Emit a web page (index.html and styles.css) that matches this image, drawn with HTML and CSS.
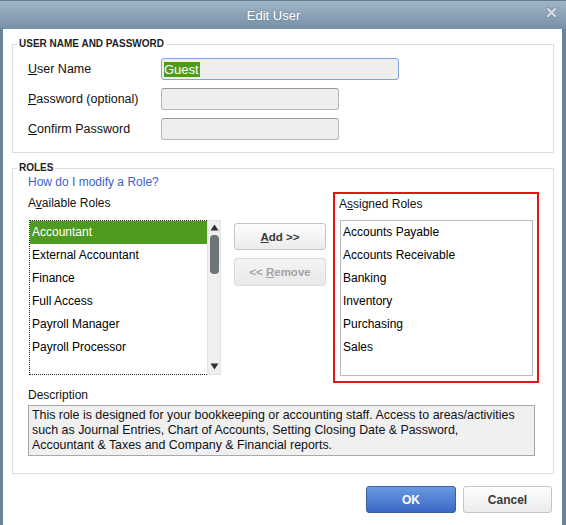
FILE: index.html
```html
<!DOCTYPE html>
<html>
<head>
<meta charset="utf-8">
<title>Edit User</title>
<link rel="stylesheet" href="styles.css">
</head>
<body>
<div class="window">
  <div class="titlebar">
    <span class="title">Edit User</span>
    <span class="close">
      <svg width="11" height="11" viewBox="0 0 11 11"><path d="M2 2 L9 9 M9 2 L2 9" stroke="#8193a4" stroke-width="4" stroke-linecap="square"/><path d="M2 2 L9 9 M9 2 L2 9" stroke="#d6dde3" stroke-width="2.2" stroke-linecap="square"/></svg>
    </span>
  </div>
  <div class="client">
    <fieldset class="group">
      <legend>USER NAME AND PASSWORD</legend>
      <div class="group-body g1">
        <div class="form-row">
          <span class="flabel"><u>U</u>ser Name</span>
          <div class="input wide focus"><span class="sel">Guest</span></div>
        </div>
        <div class="form-row">
          <span class="flabel"><u>P</u>assword (optional)</span>
          <div class="input narrow"></div>
        </div>
        <div class="form-row">
          <span class="flabel"><u>C</u>onfirm Password</span>
          <div class="input narrow"></div>
        </div>
      </div>
    </fieldset>
    <fieldset class="group g2-set">
      <legend>ROLES</legend>
      <div class="group-body g2">
        <a class="help">How do I modify a Role?</a>
        <div class="roles-row">
          <div class="avail-col">
            <div class="col-label">A<u>v</u>ailable Roles</div>
            <div class="listbox avail">
              <ul class="items dotted">
                <li class="selected">Accountant</li>
                <li>External Accountant</li>
                <li>Finance</li>
                <li>Full Access</li>
                <li>Payroll Manager</li>
                <li>Payroll Processor</li>
              </ul>
              <div class="scrollbar">
                <svg class="arrow up" width="9" height="7" viewBox="0 0 9 7"><path d="M4.5 0.5 L8.5 6.5 L0.5 6.5 Z" fill="#2f2f2f"/></svg>
                <div class="thumb"></div>
                <div class="spacer"></div>
                <svg class="arrow down" width="9" height="7" viewBox="0 0 9 7"><path d="M0.5 0.5 L8.5 0.5 L4.5 6.5 Z" fill="#2f2f2f"/></svg>
              </div>
            </div>
          </div>
          <div class="mid-col">
            <button class="btn small add"><u>A</u>dd &gt;&gt;</button>
            <button class="btn small disabled">&lt;&lt; <u>R</u>emove</button>
          </div>
          <div class="assigned-box">
            <div class="col-label">A<u>s</u>signed Roles</div>
            <ul class="items plain">
              <li>Accounts Payable</li>
              <li>Accounts Receivable</li>
              <li>Banking</li>
              <li>Inventory</li>
              <li>Purchasing</li>
              <li>Sales</li>
            </ul>
          </div>
        </div>
        <div class="desc-label">Description</div>
        <div class="desc">This role is designed for your bookkeeping or accounting staff. Access to areas/activities such as Journal Entries, Chart of Accounts, Setting Closing Date &amp; Password, Accountant &amp; Taxes and Company &amp; Financial reports.</div>
      </div>
    </fieldset>
    <div class="footer">
      <button class="btn big primary">OK</button>
      <button class="btn big">Cancel</button>
    </div>
  </div>
</div>
</body>
</html>
```

FILE: styles.css
```css
* { box-sizing: border-box; }
html, body {
  margin: 0;
  padding: 0;
}
body {
  width: 566px;
  height: 525px;
  overflow: hidden;
  background: #6b8399;
  font-family: "Liberation Sans", Arial, sans-serif;
  font-size: 12px;
  color: #000;
}
u { text-decoration: underline; text-underline-offset: 1px; }

.window {
  display: flex;
  flex-direction: column;
  height: 525px;
}

.titlebar {
  height: 29px;
  display: flex;
  align-items: center;
  background: linear-gradient(#a0b5c7, #7790a6);
  border-top: 1px solid #647c92;
}
.title {
  flex: 1;
  text-align: center;
  color: #fff;
  font-size: 13px;
  text-shadow: 0 0 2px rgba(60, 80, 100, 0.45);
}
.close {
  width: 20px;
  display: flex;
  margin-left: -1px;
  margin-top: -6px;
}
.close svg { display: block; }

.client {
  flex: 1;
  background: #fff;
  margin: 0 4px 0 3px;
  padding: 9px 8px 0 9px;
  display: flex;
  flex-direction: column;
}

.group {
  margin: 0;
  padding: 0;
  border: 1px solid #dedede;
  min-width: 0;
}
.group legend {
  font-size: 10px;
  font-weight: bold;
  line-height: 12px;
  padding: 0 2px;
  margin-left: 4px;
  color: #1e1e1e;
}
.g2-set { margin-top: 9px; }

.group-body.g1 {
  padding: 8px 0 12px 15px;
  display: flex;
  flex-direction: column;
  gap: 8px;
}
.form-row {
  display: flex;
  align-items: center;
}
.flabel {
  width: 133px;
  font-size: 12.5px;
  color: #111;
  margin-top: -1px;
}
.input {
  height: 22px;
  border: 1px solid #b5b5b5;
  border-top-color: #9a9a9a;
  border-radius: 3px;
  background: #eeeeee;
  display: flex;
  align-items: center;
}
.input.wide { width: 238px; }
.input.narrow { width: 178px; }
.input.focus { border-color: #7ea3dd; }
.sel {
  margin-left: 2px;
  background: #4e9a1f;
  color: #fff;
  font-size: 13px;
  line-height: 15px;
  padding: 0 1px 0 0;
}

.group-body.g2 {
  padding: 1px 12px 17px 15px;
  display: flex;
  flex-direction: column;
}
.help {
  display: block;
  color: #3c5fca;
  line-height: 14px;
  margin-bottom: 3px;
}
.roles-row {
  display: flex;
  align-items: flex-start;
  height: 191px;
}
.col-label {
  line-height: 14px;
  color: #111;
}
.avail-col {
  width: 193px;
  padding-top: 4px;
}
.listbox {
  margin-top: 10px;
  margin-left: 1px;
  width: 192px;
  height: 155px;
  display: flex;
}
.items {
  list-style: none;
  margin: 0;
  padding: 0;
}
.items li {
  height: 23px;
  line-height: 23px;
  padding-left: 2px;
  white-space: nowrap;
}
.items.dotted {
  flex: 1;
  border: 1px dotted #222;
  border-right: none;
}
.items li.selected {
  background: #4f9a20;
  color: #fff;
}
.scrollbar {
  width: 14px;
  background: #efefef;
  border: 1px solid #e2e2e2;
  display: flex;
  flex-direction: column;
  align-items: center;
}
.arrow { display: block; }
.arrow.up { margin-top: 3px; }
.thumb {
  margin-top: 4px;
  width: 9px;
  height: 39px;
  border-radius: 4px;
  background: #6d7676;
}
.spacer { flex: 1; }
.arrow.down { margin-bottom: 4px; }

.mid-col {
  margin-left: 13px;
  padding-top: 31px;
  display: flex;
  flex-direction: column;
  gap: 8px;
  width: 92px;
}
.btn {
  font-family: "Liberation Sans", Arial, sans-serif;
  font-weight: bold;
  border: 1px solid #c5c5c5;
  border-radius: 3px;
  background: linear-gradient(#fdfdfd, #ebebeb);
  color: #3a3a3a;
  padding: 0;
  margin: 0;
}
.btn.small {
  width: 92px;
  height: 27px;
  font-size: 11.5px;
}
.btn.disabled {
  height: 28px;
  color: #a3a3a3;
  border-color: #dadada;
  background: linear-gradient(#f4f4f4, #e9e9e9);
}
.assigned-box {
  margin-left: 7px;
  width: 206px;
  height: 191px;
  border: 2px solid #e51515;
  padding: 3px 4px 5px 4px;
  display: flex;
  flex-direction: column;
}
.assigned-box .col-label { margin-bottom: 9px; }
.items.plain {
  margin-left: 1px;
  width: 193px;
  height: 156px;
  border: 1px solid #bababa;
}

.desc-label {
  margin-top: 5px;
  line-height: 14px;
  color: #111;
}
.desc {
  margin-top: 3px;
  width: 507px;
  border: 1px solid #a8a8a8;
  background: #f0f0f0;
  padding: 2px 16px 2px 3px;
  font-size: 12.4px;
  line-height: 15px;
  color: #111;
}

.footer {
  margin-top: 12px;
  display: flex;
  justify-content: flex-end;
  gap: 7px;
  padding-right: 2px;
}
.btn.big {
  height: 27px;
  width: 89px;
  font-size: 12px;
}
.btn.primary {
  width: 90px;
  color: #fff;
  border-color: #3a5ea6;
  background: linear-gradient(#6a9ae2, #3b68c6);
}
```
